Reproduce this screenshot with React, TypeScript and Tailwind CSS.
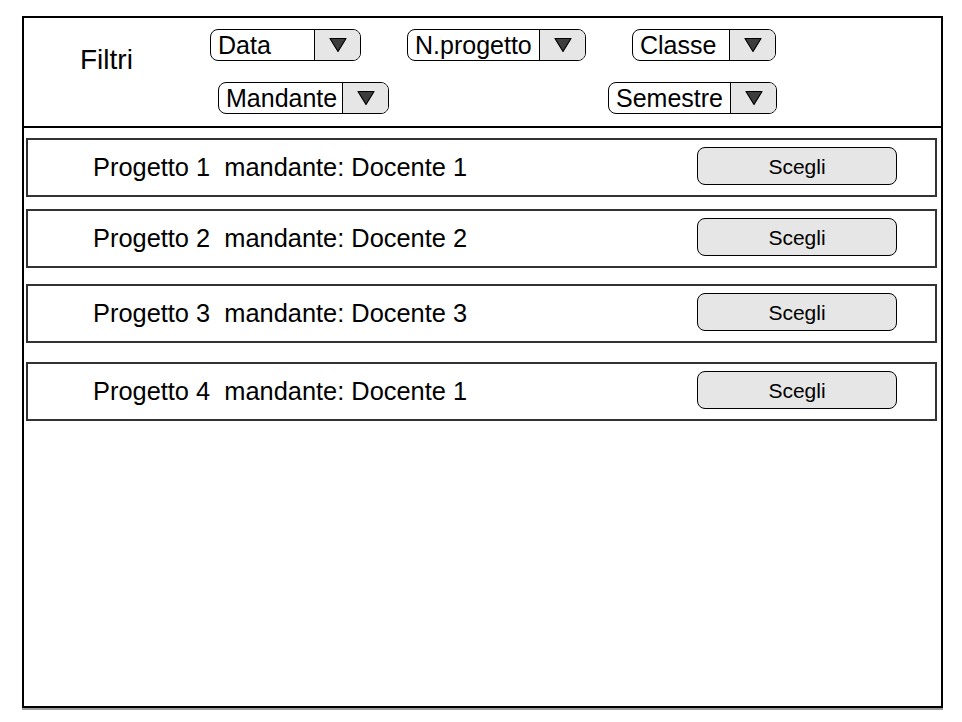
import React from 'react';

const font = { fontFamily: '"Liberation Sans", Arial, Helvetica, sans-serif' };

const Triangle = () => (
  <svg width="18" height="16" viewBox="0 0 18 16">
    <polygon points="1,1.5 17,1.5 9,14.5" fill="#3d3d3d" stroke="#000" strokeWidth="1.2" strokeLinejoin="round" />
  </svg>
);

const Select: React.FC<{ label: string; textWidth: string }> = ({ label, textWidth }) => {
  return (
    <div className="flex h-[32px] overflow-hidden rounded-[8px] border-[1.5px] border-black bg-white">
      <div className={`${textWidth} flex items-center pl-[7px] text-[25px] leading-none text-black`}>{label}</div>
      <div className="flex w-[46px] items-center justify-center border-l border-black bg-[#e6e6e6]">
        <Triangle />
      </div>
    </div>
  );
};

const ProjectRow: React.FC<{ project: string; owner: string; className?: string }> = ({ project, owner, className }) => {
  return (
    <div
      className={`flex h-[59px] items-center justify-between border-2 border-[#333] pl-[65px] pr-[38px] ${className ?? ''}`}
    >
      <span className="whitespace-pre text-[25.4px] leading-none text-black">
        {project}  mandante: {owner}
      </span>
      <button className="mb-[3px] flex h-[38px] w-[200px] items-center justify-center rounded-[8px] border-[1.5px] border-black bg-[#e6e6e6] text-[21px] leading-none text-black">
        Scegli
      </button>
    </div>
  );
};

export default function App() {
  return (
    <div className="h-[722px] w-[962px] bg-white pl-[22px] pt-[16px]" style={font}>
      <div className="flex h-[692px] w-[921px] flex-col border-2 border-black shadow-[0_2px_0_#9a9a9a]">
        {/* filtri */}
        <div className="flex h-[110px] border-b-2 border-black">
          <div className="ml-[56px] mt-[28px] w-[130px] text-[28px] leading-none text-black">Filtri</div>
          <div className="flex flex-col pt-[11px]">
            <div className="flex">
              <Select label="Data" textWidth="w-[103px]" />
              <div className="ml-[46px]">
                <Select label="N.progetto" textWidth="w-[131px]" />
              </div>
              <div className="ml-[46px]">
                <Select label="Classe" textWidth="w-[96px]" />
              </div>
            </div>
            <div className="mt-[21px] flex">
              <div className="ml-[8px]">
                <Select label="Mandante" textWidth="w-[123px]" />
              </div>
              <div className="ml-[219px]">
                <Select label="Semestre" textWidth="w-[121px]" />
              </div>
            </div>
          </div>
        </div>

        {/* lista progetti */}
        <div className="ml-[2px] mr-[4px] flex flex-col pt-[10px]">
          <ProjectRow project="Progetto 1" owner="Docente 1" />
          <ProjectRow project="Progetto 2" owner="Docente 2" className="mt-[12px]" />
          <ProjectRow project="Progetto 3" owner="Docente 3" className="mt-[16px]" />
          <ProjectRow project="Progetto 4" owner="Docente 1" className="mt-[19px]" />
        </div>
      </div>
    </div>
  );
}
